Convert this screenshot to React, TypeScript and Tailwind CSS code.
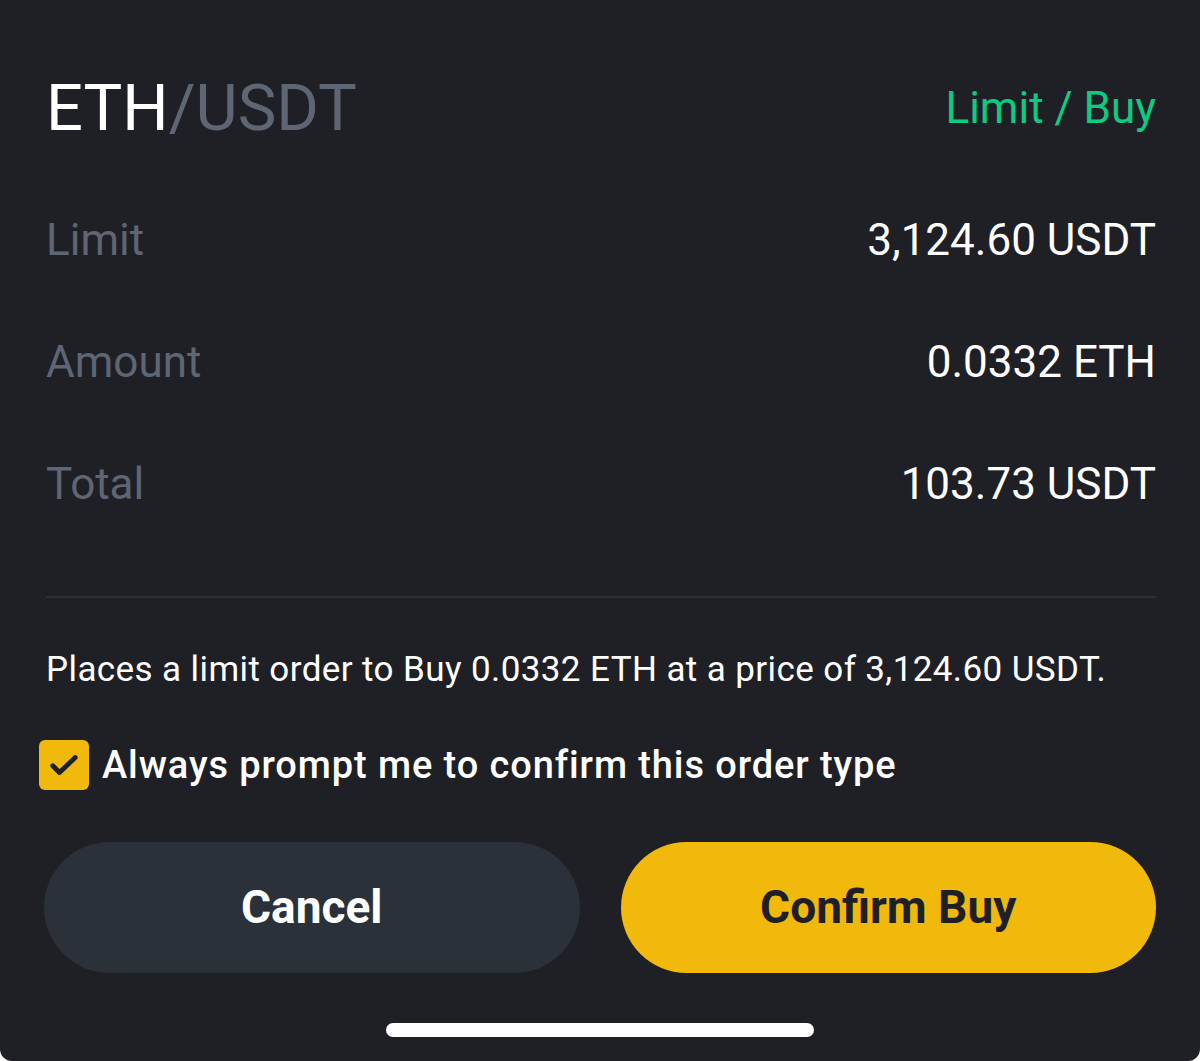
import React, { useState } from 'react';

const rows = [
  { label: 'Limit', value: '3,124.60 USDT' },
  { label: 'Amount', value: '0.0332 ETH' },
  { label: 'Total', value: '103.73 USDT' },
];

export default function App() {
  const [alwaysPrompt, setAlwaysPrompt] = useState(true);

  return (
    <div className="w-[1200px] h-[1061px] bg-white" style={{ fontFamily: 'Roboto, "Noto Sans", sans-serif' }}>
      <div className="h-full bg-[#1f2026] rounded-b-[12px] pl-[46px] pr-[44px] pt-[48px] flex flex-col">
        {/* header */}
        <div className="flex items-center justify-between h-[120px]">
          <h1 className="text-[65px] leading-none text-white">
            ETH<span className="text-[#5e6673]">/USDT</span>
          </h1>
          <span className="text-[44px] leading-none text-[#0ecb81]">Limit / Buy</span>
        </div>

        {/* order details */}
        <div className="mt-[11px] flex flex-col">
          {rows.map((row) => (
            <div key={row.label} className="flex items-center justify-between h-[122px]">
              <span className="text-[44px] leading-none text-[#5e6673]">{row.label}</span>
              <span className="text-[44px] leading-none text-white">{row.value}</span>
            </div>
          ))}
        </div>

        <div className="mt-[51px] h-[2px] bg-[#2b2f36]" />

        <div className="h-[142px] flex items-center">
          <p className="text-[35px] leading-none tracking-[0.4px] text-white">
            Places a limit order to Buy 0.0332 ETH at a price of 3,124.60 USDT.
          </p>
        </div>

        <button
          onClick={() => setAlwaysPrompt(!alwaysPrompt)}
          className="-ml-[7px] flex items-center gap-[13px] h-[50px] text-left"
        >
          <span
            className={`w-[50px] h-[50px] rounded-[6px] flex items-center justify-center ${
              alwaysPrompt ? 'bg-[#f0b90b]' : 'border-2 border-[#5e6673]'
            }`}
          >
            {alwaysPrompt && (
              <svg width="36" height="36" viewBox="0 0 24 24" fill="none">
                <path d="M4.5 12.5l4.5 4.5L19.5 7" stroke="#1f2026" strokeWidth="3.2" strokeLinecap="round" strokeLinejoin="round" />
              </svg>
            )}
          </span>
          <span className="text-[38px] leading-none font-medium tracking-[0.9px] text-white">
            Always prompt me to confirm this order type
          </span>
        </button>

        <div className="mt-[52px] grid grid-cols-2 gap-[41px] -ml-[2px]">
          <button className="h-[131px] rounded-full bg-[#2b3139] text-white text-[46px] font-bold">
            Cancel
          </button>
          <button className="h-[131px] rounded-full bg-[#f0b90b] text-[#1f2026] text-[46px] font-bold">
            Confirm Buy
          </button>
        </div>

        <div className="mt-[50px] flex justify-center pr-[2px]">
          <div className="w-[428px] h-[14px] rounded-full bg-white" />
        </div>
      </div>
    </div>
  );
}
